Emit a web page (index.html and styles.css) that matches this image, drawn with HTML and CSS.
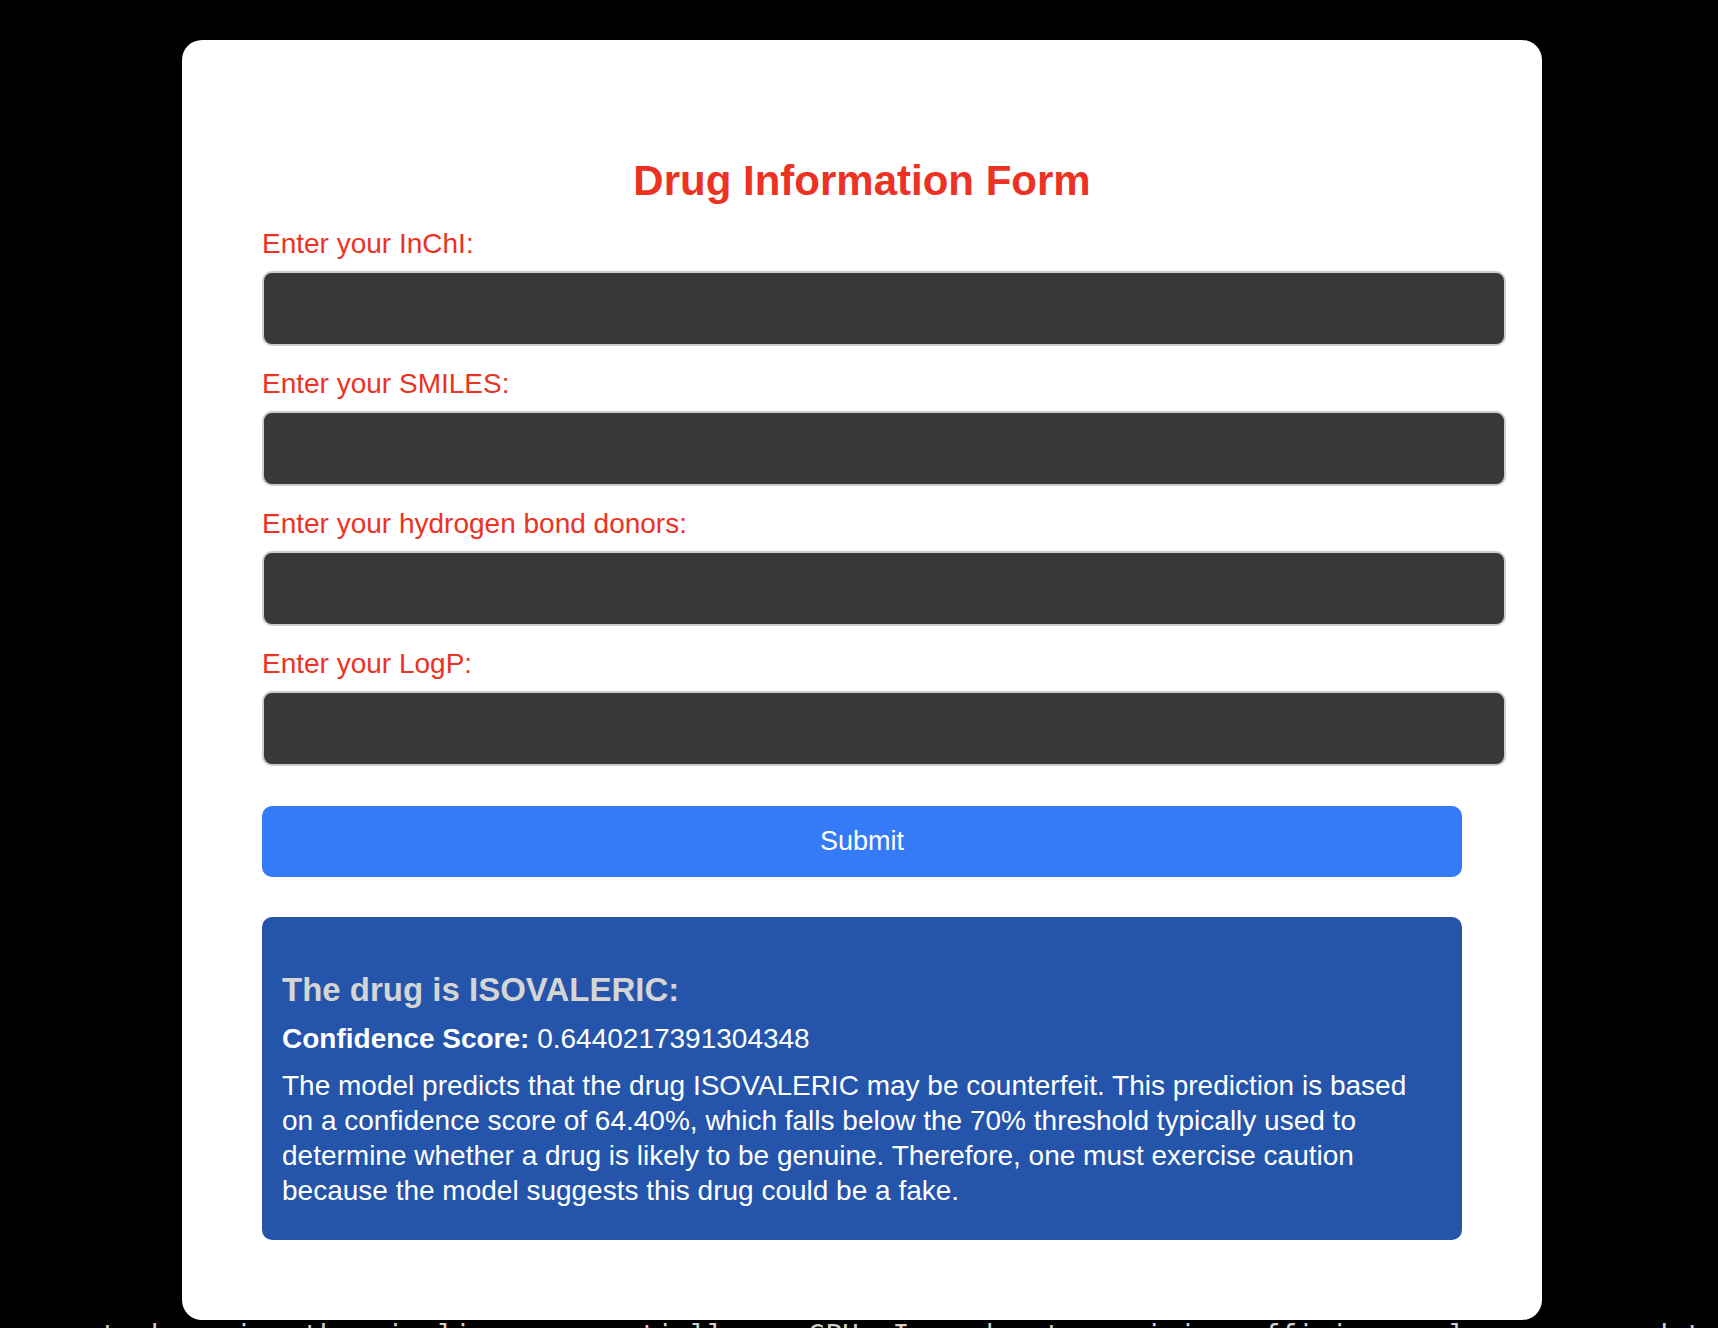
FILE: index.html
```html
<!DOCTYPE html>
<html lang="en">
<head>
  <meta charset="utf-8">
  <title>Drug Information Form</title>
  <link rel="stylesheet" href="styles.css">
</head>
<body>
  <main class="card">
    <h1 class="title">Drug Information Form</h1>
    <form class="form">
      <div class="field">
        <label for="inchi">Enter your InChI:</label>
        <input type="text" id="inchi" name="inchi">
      </div>
      <div class="field">
        <label for="smiles">Enter your SMILES:</label>
        <input type="text" id="smiles" name="smiles">
      </div>
      <div class="field">
        <label for="donors">Enter your hydrogen bond donors:</label>
        <input type="text" id="donors" name="donors">
      </div>
      <div class="field">
        <label for="logp">Enter your LogP:</label>
        <input type="text" id="logp" name="logp">
      </div>
      <button class="submit" type="submit">Submit</button>
    </form>
    <section class="result">
      <h2>The drug is ISOVALERIC:</h2>
      <p><strong>Confidence Score:</strong> 0.6440217391304348</p>
      <p>The model predicts that the drug ISOVALERIC may be counterfeit. This prediction is based on a confidence score of 64.40%, which falls below the 70% threshold typically used to determine whether a drug is likely to be genuine. Therefore, one must exercise caution because the model suggests this drug could be a fake.</p>
    </section>
  </main>
  <div class="log">seem to be using the pipelines sequentially on GPU. In order to maximize efficiency please use a dataset</div>
</body>
</html>
```
FILE: styles.css
```css
* {
  box-sizing: border-box;
}

body {
  margin: 0;
  height: 100vh;
  overflow: hidden;
  background: #000;
  font: 28px/35px "Liberation Sans", Arial, Helvetica, sans-serif;
}

.card {
  margin: 40px 176px 0 182px;
  padding: 116px 80px 80px;
  border-radius: 20px;
  background: #fff;
}

.title {
  margin: 0 0 20px;
  color: #eb3223;
  font-size: 42px;
  line-height: 50px;
  text-align: center;
}

.form {
  display: flex;
  flex-direction: column;
  gap: 20px;
}

.field {
  display: flex;
  flex-direction: column;
  gap: 10px;
  color: #eb3223;
}

/* Inputs run past the column by their own padding and border. */
.field input {
  width: calc(100% + 44px);
  height: 75px;
  padding: 20px;
  border: 2px solid #ccc;
  border-radius: 10px;
  background: #383838;
  color: #fff;
  font: inherit;
}

.submit {
  height: 71px;
  margin-top: 20px;
  padding: 0;
  border: 0;
  border-radius: 10px;
  background: #357af6;
  color: #fff;
  font: inherit;
  font-size: 27px;
  cursor: pointer;
}

.result {
  margin-top: 40px;
  padding: 53px 20px 32px;
  border-radius: 10px;
  background: #2455ab;
  color: #fff;
}

.result h2 {
  margin: 0 0 12px;
  color: #d5d5d5;
  font-size: 33px;
  line-height: 39px;
}

.result p {
  margin: 0 0 12px;
}

.result p:last-child {
  margin-bottom: 0;
}

.log {
  padding-left: 16px;
  overflow: hidden;
  color: #d0d0d0;
  font: 28px/32px "DejaVu Sans Mono", Menlo, monospace;
  white-space: nowrap;
}
```
